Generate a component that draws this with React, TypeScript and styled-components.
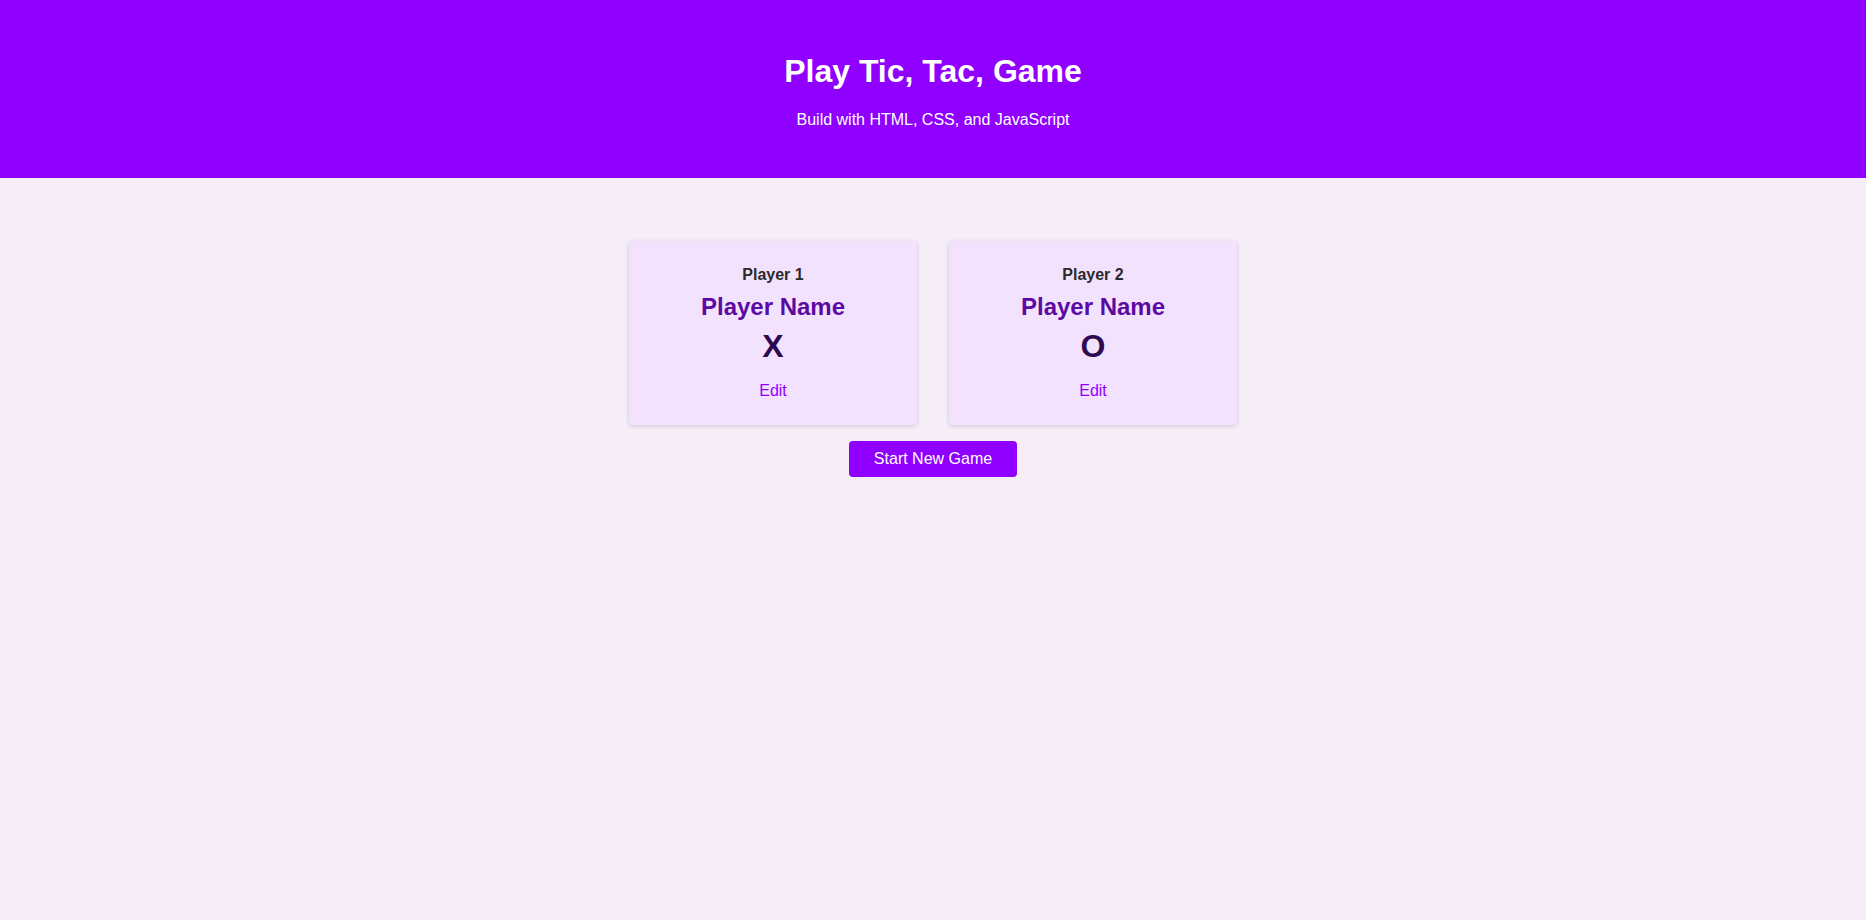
import React from "react";
import styled, { createGlobalStyle } from "styled-components";

const GlobalStyle = createGlobalStyle`
  * { box-sizing: border-box; }
  html, body { margin: 0; padding: 0; }
  body {
    font-family: "Liberation Sans", Arial, sans-serif;
    background: #f5eef6;
    min-height: 100vh;
  }
`;

const Header = styled.header`
  background: #9000ff;
  color: #ffffff;
  text-align: center;
  height: 178px;
  padding-top: 53px;
`;

const Title = styled.h1`
  margin: 0;
  font-size: 32px;
  line-height: 37px;
  font-weight: 700;
`;

const Subtitle = styled.p`
  margin: 21px 0 0;
  font-size: 16px;
  line-height: 18px;
`;

const Main = styled.main`
  display: flex;
  flex-direction: column;
  align-items: center;
  padding-top: 63px;
`;

const Players = styled.ol`
  list-style: none;
  margin: 0;
  padding: 0;
  display: flex;
  gap: 32px;
`;

const Card = styled.li`
  width: 288px;
  height: 184px;
  background: #f3e2fd;
  border-radius: 4px;
  box-shadow: 0 1px 4px rgba(80, 40, 110, 0.22);
  display: flex;
  flex-direction: column;
  align-items: center;
  padding-top: 25px;
`;

const Label = styled.h2`
  margin: 0;
  font-size: 16px;
  line-height: 18px;
  font-weight: 700;
  color: #2a2a2a;
`;

const Name = styled.span`
  margin-top: 9px;
  font-size: 24px;
  line-height: 28px;
  font-weight: 700;
  color: #5b0aa3;
`;

const Symbol = styled.span`
  margin-top: 7px;
  font-size: 32px;
  line-height: 37px;
  font-weight: 700;
  color: #2e0a50;
`;

const EditButton = styled.button`
  margin-top: 17px;
  border: none;
  background: none;
  padding: 0;
  font-family: inherit;
  font-size: 16px;
  line-height: 18px;
  color: #9000ff;
  cursor: pointer;
`;

const StartButton = styled.button`
  margin-top: 16px;
  height: 36px;
  padding: 0 25px;
  border: none;
  border-radius: 4px;
  background: #9000ff;
  color: #ffffff;
  font-family: inherit;
  font-size: 16px;
  cursor: pointer;
`;

const players = [
  { label: "Player 1", symbol: "X" },
  { label: "Player 2", symbol: "O" },
];

export default function App() {
  return (
    <>
      <GlobalStyle />
      <Header>
        <Title>Play Tic, Tac, Game</Title>
        <Subtitle>Build with HTML, CSS, and JavaScript</Subtitle>
      </Header>
      <Main>
        <Players>
          {players.map((p) => (
            <Card key={p.label}>
              <Label>{p.label}</Label>
              <Name>Player Name</Name>
              <Symbol>{p.symbol}</Symbol>
              <EditButton>Edit</EditButton>
            </Card>
          ))}
        </Players>
        <StartButton>Start New Game</StartButton>
      </Main>
    </>
  );
}
